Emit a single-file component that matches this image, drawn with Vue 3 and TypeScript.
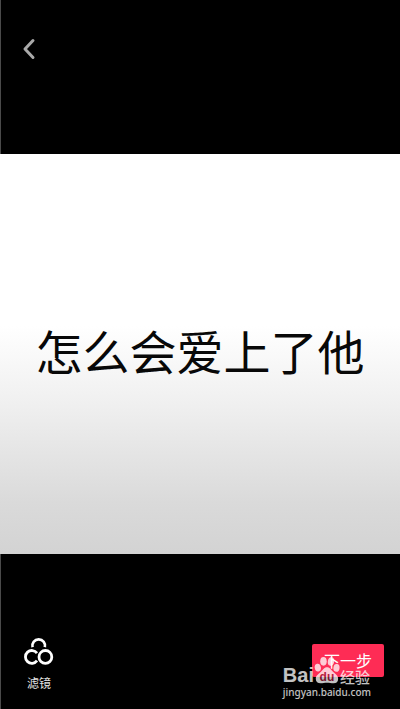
<script setup lang="ts">
import { ref } from 'vue'

const caption = ref<string>('怎么会爱上了他')
</script>

<template>
  <main class="editor">
    <header class="top">
      <button class="back" type="button" aria-label="返回">
        <svg width="16" height="24" viewBox="0 0 16 24" fill="none">
          <path d="M12 4.5 4 13 12 21.5" stroke="#a9a9a9" stroke-width="3" stroke-linecap="round" stroke-linejoin="round" />
        </svg>
      </button>
    </header>

    <section class="stage">
      <p class="caption">{{ caption }}</p>
    </section>

    <footer class="bottom">
      <button class="filter" type="button">
        <svg width="30" height="28" viewBox="0 0 30 28" fill="none" stroke="#fff" stroke-width="2.8">
          <path d="M8.6 10.2A6.3 6.3 0 1 1 20.8 10.2" />
          <path d="M13 16.1A6.4 6.4 0 1 0 13 23.7" />
          <circle cx="21.4" cy="19.9" r="6.4" />
        </svg>
        <span>滤镜</span>
      </button>
      <button class="next" type="button">下一步</button>

      <div class="watermark">
        <div class="brand">
          <span class="bai">Bai</span>
          <span class="paw">
            <svg width="26" height="28" viewBox="0 0 28 30" fill="currentColor">
              <ellipse cx="4.1" cy="12.4" rx="3.3" ry="4.2" transform="rotate(-12 4.1 12.4)" />
              <ellipse cx="10.2" cy="5.6" rx="3.5" ry="4.7" />
              <ellipse cx="18.3" cy="5.8" rx="3.4" ry="4.6" transform="rotate(10 18.3 5.8)" />
              <ellipse cx="24.2" cy="12.8" rx="3.3" ry="4.2" transform="rotate(8 24.2 12.8)" />
              <path d="M14 12c-3.2 0-4.6 3-6.8 5.1-2.4 2.2-5.3 3.8-5.3 7.2 0 3.2 2.2 5 5.1 5 2.6 0 4.3-.6 7-.6s4.5.6 7.2.6c3 0 4.8-1.8 4.8-5 0-3.4-2.8-5-5.2-7.2C18.6 15 17.2 12 14 12Z" />
            </svg>
            <span class="du">du</span>
          </span>
          <span class="jingyan">经验</span>
        </div>
        <div class="site">jingyan.baidu.com</div>
      </div>
    </footer>
  </main>
</template>

<style>
body {
  margin: 0;
  background: #000;
}
</style>

<style scoped>
.editor {
  box-sizing: border-box;
  min-height: 100vh;
  display: flex;
  flex-direction: column;
  background: #000;
  border-left: 1px solid #4a4a4a;
  font-family: "Noto Sans", "Noto Sans CJK SC", sans-serif;
}

button {
  margin: 0;
  padding: 0;
  border: 0;
  background: none;
  color: #fff;
  font: inherit;
  cursor: pointer;
}

.top {
  box-sizing: border-box;
  height: 154px;
  padding: 36px 20px;
}

.back {
  display: block;
}

.back svg,
.filter svg,
.paw svg {
  display: block;
}

.stage {
  box-sizing: border-box;
  display: flex;
  align-items: center;
  justify-content: center;
  aspect-ratio: 1;
  margin-left: -1px;
  padding-bottom: 8px;
  background: linear-gradient(#fff 0%, #fff 43%, #f0f0f0 62%, #dadada 87%, #d3d3d3 100%);
}

.caption {
  margin: 0;
  color: #080808;
  font-family: "Noto Sans CJK SC", sans-serif;
  font-size: 47px;
  line-height: 64px;
  font-weight: 400;
  white-space: nowrap;
}

.bottom {
  position: relative;
  flex: 1;
  display: flex;
  align-items: flex-end;
  justify-content: space-between;
  padding: 0 16px 17px 23px;
}

.filter {
  display: flex;
  flex-direction: column;
  align-items: center;
  gap: 9px;
  font-family: "Noto Sans CJK SC", sans-serif;
  font-size: 12px;
  line-height: 18px;
  color: #e4e4e4;
}

.next {
  width: 72px;
  height: 33px;
  margin-bottom: 15px;
  border-radius: 2px;
  background: #fe2c55;
  font-family: "Noto Sans CJK SC", sans-serif;
  font-size: 16px;
  line-height: 33px;
}

.watermark {
  position: absolute;
  right: 29px;
  bottom: 9px;
  color: #fff;
  opacity: 0.76;
  pointer-events: none;
}

.brand {
  display: flex;
  align-items: flex-end;
  height: 28px;
}

.bai {
  font-family: "Liberation Sans", sans-serif;
  font-size: 20px;
  line-height: 18px;
  font-weight: 700;
}

.paw {
  position: relative;
}

.du {
  position: absolute;
  inset: auto 0 0 0;
  color: #a01c3a;
  font-family: "Liberation Sans", sans-serif;
  font-size: 12px;
  line-height: 13px;
  font-weight: 700;
  text-align: center;
}

.jingyan {
  font-family: "Noto Sans CJK SC", sans-serif;
  font-size: 15px;
  line-height: 14px;
  font-weight: 500;
}

.site {
  font-size: 10px;
  line-height: 16px;
  font-weight: 500;
}
</style>
